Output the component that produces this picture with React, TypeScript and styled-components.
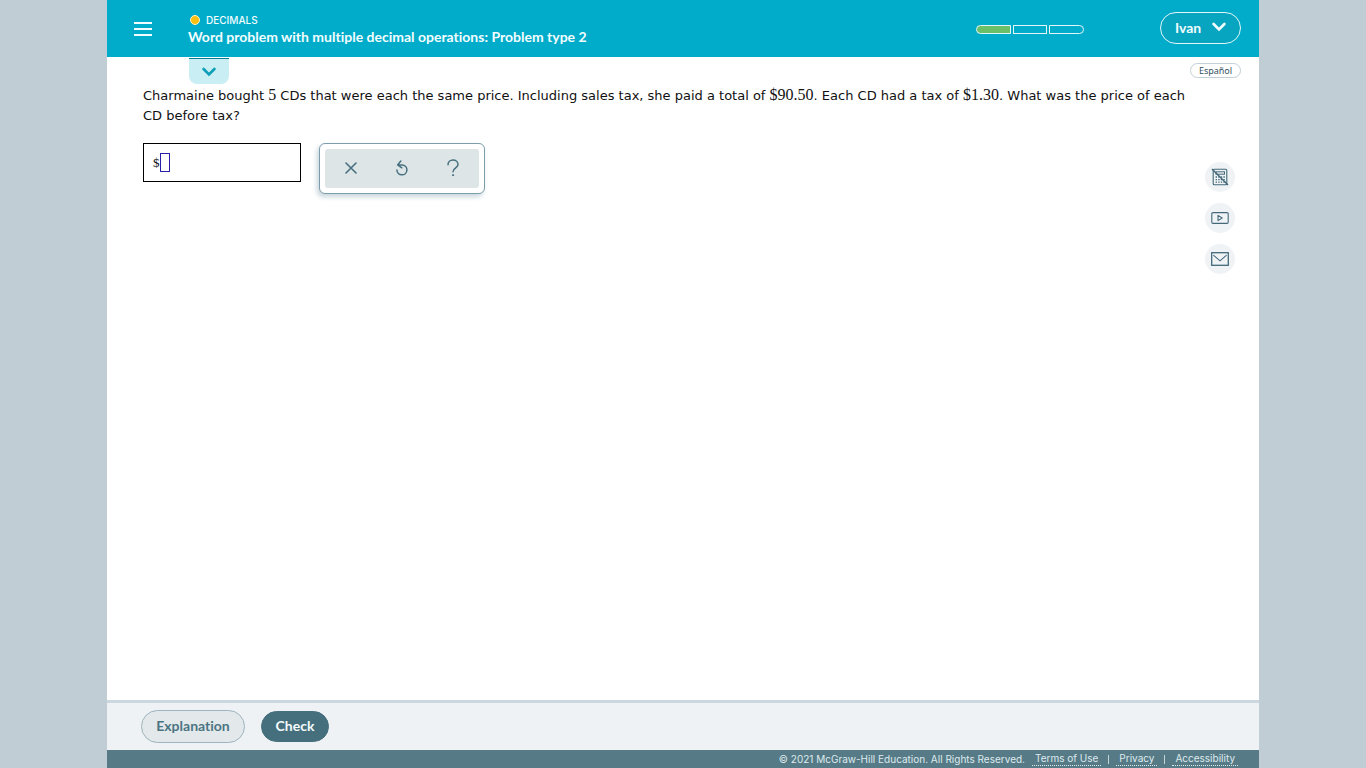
import React from "react";
import styled, { createGlobalStyle } from "styled-components";

const ui = `"Proxima Nova", Lato, "Liberation Sans", sans-serif`;
const smallUi = `Inter, "Liberation Sans", sans-serif`;

const GlobalStyle = createGlobalStyle`
  *, *::before, *::after { box-sizing: border-box; }
  body { margin: 0; background: #c0cdd4; }
  button, input { font: inherit; margin: 0; padding: 0; }
  svg { display: block; }
`;

const Page = styled.div`
  display: flex;
  flex-direction: column;
  min-height: 100vh;
  margin: 0 107px;
  background: #fff;
  font-family: ${ui};
  font-variant-ligatures: none;
`;

const Header = styled.header`
  display: flex;
  align-items: center;
  height: 57px;
  padding: 0 18px 0 27px;
  background: #00acca;
  color: #f2fdff;
`;

const MenuButton = styled.button`
  width: 18px;
  height: 14px;
  border: 0;
  background: none;
  color: inherit;
  cursor: pointer;
`;

const Heading = styled.div`
  flex: 1;
  margin-left: 36px;
`;

const Topic = styled.div`
  display: flex;
  align-items: center;
  gap: 6px;
  padding-left: 2px;
  font-family: ${smallUi};
  font-size: 10px;
  font-weight: 500;
  line-height: 16px;
`;

const Dot = styled.span`
  width: 10px;
  height: 10px;
  border: 1px solid #fff3c4;
  border-radius: 50%;
  background: #fdc010;
`;

const Title = styled.h1`
  margin: 0;
  font-size: 14px;
  font-weight: 700;
  line-height: 18px;
`;

const Progress = styled.div`
  display: flex;
  gap: 2px;
  width: 108px;
  height: 9px;
  margin: 1px 76px 0 0;
`;

const Segment = styled.span<{ $done?: boolean }>`
  flex: 1;
  border: 1px solid #e2f7fa;
  background: ${(p) => (p.$done ? "#6abf69" : "transparent")};
  &:first-child { border-radius: 5px 0 0 5px; }
  &:last-child { border-radius: 0 5px 5px 0; }
`;

const UserButton = styled.button`
  display: flex;
  align-items: center;
  justify-content: space-between;
  width: 81px;
  height: 32px;
  margin-bottom: 1px;
  padding: 0 14px 2px;
  border: 1px solid #e2f7fa;
  border-radius: 16px;
  background: #08a5c1;
  color: inherit;
  font-size: 14px;
  font-weight: 700;
  cursor: pointer;
`;

const Main = styled.main`
  display: flex;
  flex: 1;
  justify-content: space-between;
  padding: 1px 18px 0 36px;
`;

const Problem = styled.section`
  flex: 1;
  padding-right: 4px;
`;

const ExpandTab = styled.button`
  display: flex;
  align-items: center;
  justify-content: center;
  width: 40px;
  height: 26px;
  margin-left: 46px;
  border: 0;
  border-top: 1px solid #077a92;
  border-radius: 0 0 8px 8px;
  background: #c9eef3;
  color: #0b9fb8;
  cursor: pointer;
`;

const Question = styled.p`
  margin: 2px 0 17px;
  color: #111;
  font-family: Verdana, "DejaVu Sans", sans-serif;
  font-size: 13px;
  line-height: 20px;
`;

const Num = styled.span`
  font-family: "Times New Roman", "Liberation Serif", serif;
  font-size: 16px;
  line-height: 1;
`;

const Workspace = styled.div`
  display: flex;
  align-items: flex-start;
  gap: 18px;
`;

const AnswerBox = styled.label`
  display: flex;
  align-items: center;
  width: 158px;
  height: 39px;
  padding: 0 9px;
  border: 1px solid #000;
  color: #111;
  font-family: "Times New Roman", "Liberation Serif", serif;
  font-size: 13px;
`;

const AnswerInput = styled.input`
  width: 10px;
  height: 19px;
  border: 1px solid #2a1fa8;
  border-radius: 0;
  background: #fff;
  outline: none;
`;

const ToolPanel = styled.div`
  padding: 5px;
  border: 1px solid #7c9dab;
  border-radius: 6px;
  background: #fff;
  box-shadow: -2px 3px 5px #c9d6dc;
`;

const ToolRow = styled.div`
  display: flex;
  border-radius: 3px;
  background: #dde5e7;
`;

const ToolButton = styled.button`
  display: grid;
  place-items: center;
  width: 51px;
  height: 39px;
  padding-bottom: 1px;
  border: 0;
  background: none;
  color: #46707f;
  cursor: pointer;
  &:last-child { width: 52px; }
`;

const Rail = styled.aside`
  display: flex;
  flex-direction: column;
  align-items: flex-end;
  padding-top: 5px;
`;

const LanguageButton = styled.button`
  width: 51px;
  height: 15px;
  border: 1px solid #c3cfd6;
  border-radius: 8px;
  background: #fff;
  color: #33505f;
  font-family: "Noto Sans", sans-serif;
  font-size: 9px;
  line-height: 12px;
  cursor: pointer;
`;

const RailTools = styled.div`
  display: grid;
  gap: 11px;
  margin: 84px 6px 0 0;
`;

const RailButton = styled.button`
  display: grid;
  place-items: center;
  width: 30px;
  height: 30px;
  border: 0;
  border-radius: 50%;
  background: #eff3f5;
  color: #44697a;
  cursor: pointer;
`;

const ActionBar = styled.div`
  display: flex;
  align-items: center;
  gap: 16px;
  height: 50px;
  padding: 0 34px;
  border-top: 3px solid #ccd8df;
  background: #eef2f4;
`;

const Pill = styled.button<{ $primary?: boolean }>`
  width: ${(p) => (p.$primary ? "68px" : "104px")};
  height: ${(p) => (p.$primary ? "31px" : "33px")};
  padding-bottom: 2px;
  border: 1px solid ${(p) => (p.$primary ? "#466f7d" : "#9db4be")};
  border-radius: 17px;
  background: ${(p) => (p.$primary ? "#466f7d" : "#e3e8ea")};
  color: ${(p) => (p.$primary ? "#f4fbfc" : "#4b7483")};
  font-size: 14px;
  font-weight: 700;
  cursor: pointer;
`;

const Legal = styled.footer`
  display: flex;
  align-items: center;
  justify-content: flex-end;
  height: 18px;
  padding-right: 21px;
  background: #567b87;
  color: #dfeaed;
  font-family: ${smallUi};
  font-size: 10px;
  line-height: 13px;
`;

const LegalLinks = styled.nav`
  display: flex;
  align-items: center;
  margin-left: 7px;
`;

const LegalLink = styled.a`
  padding: 0 3px;
  border-bottom: 1px dotted #dfeaed;
  color: inherit;
  text-decoration: none;
`;

const Divider = styled.span`
  width: 1px;
  height: 9px;
  margin: 0 7px;
  background: #c3d3d8;
`;

const Chevron = () => (
  <svg width="14" height="10" viewBox="0 0 14 10" fill="none" stroke="currentColor" strokeWidth="2.6" strokeLinecap="round">
    <path d="M1.6 2 7 7.4 12.4 2" />
  </svg>
);

export default function App() {
  return (
    <>
      <GlobalStyle />
      <Page>
        <Header>
          <MenuButton aria-label="Menu">
            <svg width="18" height="14" viewBox="0 0 18 14" stroke="currentColor" strokeWidth="2">
              <path d="M0 1h18M0 7h18M0 13h18" />
            </svg>
          </MenuButton>
          <Heading>
            <Topic>
              <Dot />
              DECIMALS
            </Topic>
            <Title>Word problem with multiple decimal operations: Problem type 2</Title>
          </Heading>
          <Progress role="img" aria-label="1 of 3 complete">
            <Segment $done />
            <Segment />
            <Segment />
          </Progress>
          <UserButton>
            Ivan
            <Chevron />
          </UserButton>
        </Header>

        <Main>
          <Problem>
            <ExpandTab aria-label="Expand">
              <Chevron />
            </ExpandTab>
            <Question>
              Charmaine bought <Num>5</Num> CDs that were each the same price. Including sales tax, she paid a total of{" "}
              <Num>$90.50</Num>. Each CD had a tax of <Num>$1.30</Num>. What was the price of each CD before tax?
            </Question>
            <Workspace>
              <AnswerBox>
                $
                <AnswerInput type="text" aria-label="Answer in dollars" />
              </AnswerBox>
              <ToolPanel>
                <ToolRow>
                  <ToolButton aria-label="Clear">
                    <svg width="12" height="12" viewBox="0 0 12 12" fill="none" stroke="currentColor" strokeWidth="1.6" strokeLinecap="round">
                      <path d="M1 1l10 10M11 1 1 11" />
                    </svg>
                  </ToolButton>
                  <ToolButton aria-label="Undo">
                    <svg width="14" height="16" viewBox="0 0 14 16" fill="none" stroke="currentColor" strokeWidth="1.5" strokeLinecap="round" strokeLinejoin="round">
                      <path d="M5.8 1 2.6 4.9 6.8 7.8M2.6 4.9H7.6A5 5 0 1 1 1.9 10" />
                    </svg>
                  </ToolButton>
                  <ToolButton aria-label="Help">
                    <svg width="12" height="18" viewBox="0 0 12 18" fill="none" stroke="currentColor" strokeWidth="1.5" strokeLinecap="round">
                      <path d="M1 5.8C1 2.9 3.2 1 6 1s5 1.9 5 4.6C11 9 6 8.8 6 12.8" />
                      <circle cx="6" cy="16.2" r="0.6" fill="currentColor" strokeWidth="0.9" />
                    </svg>
                  </ToolButton>
                </ToolRow>
              </ToolPanel>
            </Workspace>
          </Problem>

          <Rail>
            <LanguageButton>Español</LanguageButton>
            <RailTools>
              <RailButton aria-label="Calculator unavailable">
                <svg width="18" height="18" viewBox="0 0 18 18" fill="none" stroke="currentColor" strokeWidth="1.1">
                  <rect x="2.2" y="1.2" width="13.6" height="15.6" rx="1" />
                  <rect x="5" y="3.8" width="8.5" height="2.4" strokeWidth="1" />
                  <path d="M4.6 9h9.2M4.6 11.6h9.2M4.6 14.2h9.2" strokeWidth="1.3" strokeDasharray="1.4 1.2" />
                  <path d="M1 1l16 16" strokeWidth="1.4" />
                </svg>
              </RailButton>
              <RailButton aria-label="Video">
                <svg width="18" height="12" viewBox="0 0 18 12" fill="none" stroke="currentColor" strokeWidth="1.1">
                  <rect x="0.8" y="0.6" width="16.4" height="10.8" rx="1.2" />
                  <path d="M7 3.4v5.2L11.2 6z" strokeLinejoin="round" />
                </svg>
              </RailButton>
              <RailButton aria-label="Message">
                <svg width="18" height="14" viewBox="0 0 18 14" fill="none" stroke="currentColor" strokeWidth="1.3">
                  <rect x="0.7" y="0.7" width="16.6" height="12.6" />
                  <path d="M2.4 3.2 9 8.8l6.6-5.6" strokeWidth="1.1" />
                </svg>
              </RailButton>
            </RailTools>
          </Rail>
        </Main>

        <ActionBar>
          <Pill>Explanation</Pill>
          <Pill $primary>Check</Pill>
        </ActionBar>
        <Legal>
          © 2021 McGraw-Hill Education. All Rights Reserved.
          <LegalLinks>
            <LegalLink href="#terms">Terms of Use</LegalLink>
            <Divider />
            <LegalLink href="#privacy">Privacy</LegalLink>
            <Divider />
            <LegalLink href="#accessibility">Accessibility</LegalLink>
          </LegalLinks>
        </Legal>
      </Page>
    </>
  );
}
